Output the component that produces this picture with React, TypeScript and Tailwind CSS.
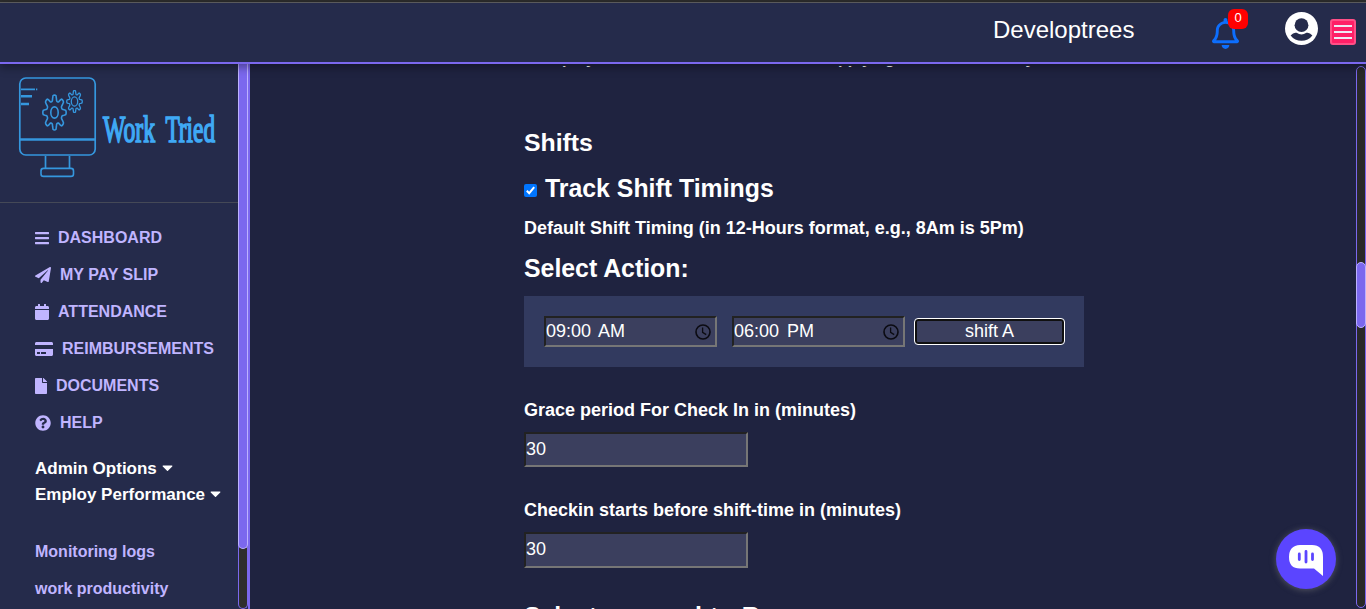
import React from "react";
import {
  FaBars,
  FaPaperPlane,
  FaCalendar,
  FaCreditCard,
  FaFile,
  FaQuestionCircle,
  FaCaretDown,
  FaRegBell,
} from "react-icons/fa";

const links = [
  { label: "DASHBOARD", Icon: FaBars, box: "w-[14px]" },
  { label: "MY PAY SLIP", Icon: FaPaperPlane, box: "w-4" },
  { label: "ATTENDANCE", Icon: FaCalendar, box: "w-[14px]" },
  { label: "REIMBURSEMENTS", Icon: FaCreditCard, box: "w-[18px]" },
  { label: "DOCUMENTS", Icon: FaFile, box: "w-3" },
  { label: "HELP", Icon: FaQuestionCircle, box: "w-4" },
];

function gearPath(cx: number, cy: number, rx: number, ry: number) {
  const pts: string[] = [];
  for (let i = 0; i <= 96; i++) {
    const a = (i / 96) * Math.PI * 2;
    const k = 0.83 + 0.17 * Math.tanh(2.2 * Math.cos(8 * a));
    pts.push(`${(cx + rx * k * Math.sin(a)).toFixed(2)} ${(cy - ry * k * Math.cos(a)).toFixed(2)}`);
  }
  return `M${pts.join("L")}Z`;
}

function Logo() {
  return (
    <svg width="238" height="138" viewBox="0 0 238 138" fill="none" stroke="#3597de" strokeWidth="1.6">
      <rect x="19.8" y="14" width="75.4" height="77" rx="6" strokeWidth="1.7" />
      <path d="M20 75.5H95" strokeWidth="2.6" />
      <path d="M21 25.3H35M36 25.3h1.3" strokeWidth="1.8" />
      <path d="M21 32.3H32M21 40H29" strokeWidth="2.4" />
      <path d={gearPath(54.5, 48.5, 11.7, 17.5)} />
      <ellipse cx="54.5" cy="48.5" rx="3.7" ry="5.6" />
      <path d={gearPath(74.5, 37.5, 7.8, 11)} strokeWidth="1.3" />
      <ellipse cx="74.5" cy="37.5" rx="3.2" ry="4.6" strokeWidth="1.3" />
      <path d="M45.5 92V104M69.5 92V104" strokeWidth="1.7" />
      <rect x="41" y="104.4" width="32.5" height="8" rx="2.5" />
      <g fill="#3fa9f5" stroke="#3fa9f5" fontFamily="'Liberation Serif', serif" fontSize="38">
        <text x="103" y="77.5" textLength="52" lengthAdjust="spacingAndGlyphs" strokeWidth="1.7">Work</text>
        <text x="165.5" y="77.5" textLength="49.5" lengthAdjust="spacingAndGlyphs" strokeWidth="1.7">Tried</text>
      </g>
    </svg>
  );
}

function Avatar() {
  return (
    <svg className="mt-[9px]" width="33" height="33" viewBox="0 0 33 33">
      <circle cx="16.5" cy="16.5" r="16.5" fill="#fff" />
      <path d="M5.6 23.4Q8.6 20 11.6 20.8Q16.5 24 21.4 20.8Q24.4 20 27.4 23.4A13.6 13.6 0 0 1 5.6 23.4Z" fill="#252b4b" />
      <circle cx="16.5" cy="13.2" r="6.9" fill="#252b4b" />
    </svg>
  );
}

function Clock() {
  return (
    <svg width="16" height="16" viewBox="0 0 16 16" fill="none" stroke="#0b0b12" strokeWidth="1.6">
      <circle cx="8" cy="8" r="7" />
      <path d="M7.6 3.5V8.3L11.2 10.6" strokeWidth="1.3" />
    </svg>
  );
}

const inset =
  "border-2 border-t-[#222] border-l-[#222] border-r-[#767676] border-b-[#767676] bg-[#3b3f5e] text-[18px] text-white";

function TimeField({ value }: { value: string }) {
  return (
    <div className={`${inset} flex h-[31px] w-[173px] items-center justify-between pr-[4px] [word-spacing:3px]`}>
      <span className="-mt-px leading-[24px]">{value}</span>
      <Clock />
    </div>
  );
}

export default function App() {
  return (
    <div className="flex h-[609px] w-[1366px] flex-col overflow-hidden bg-[#1f2340] font-['Liberation_Sans',Arial,sans-serif] text-white">
      <div className="h-[2px] shrink-0 bg-[#2d2d2d]" />
      <header className="relative z-10 flex h-[62px] shrink-0 border-t border-b-2 border-t-[#5a5a5c] border-b-[#7b68ee] bg-[#252b4b] pl-[993px] shadow-[0_3px_9px_rgba(0,0,0,0.4)]">
        <div className="mt-[9px] w-[219px] text-[24px] leading-[36px]">Developtrees</div>
        <div className="relative mt-[15px] h-[32px] w-[73px] text-[#0d6efd]">
          <FaRegBell className="h-[31px] w-[27px]" />
          <span className="absolute -top-[9px] left-4 flex h-5 w-5 items-center justify-center rounded-[6px] bg-[#f00] pb-[2px] text-[13px] text-white">0</span>
        </div>
        <Avatar />
        <div className="mt-4 ml-3 flex h-[26px] w-[26px] flex-col items-center justify-center gap-[4px] rounded-[3px] border-2 border-[#ff4f87] bg-[#ff1f67]">
          <span className="h-[2px] w-[18px] bg-[#eee8f5]" />
          <span className="h-[2px] w-[18px] bg-[#eee8f5]" />
          <span className="h-[2px] w-[18px] bg-[#eee8f5]" />
        </div>
      </header>

      <div className="flex h-[545px]">
        <aside className="flex w-[250px] shrink-0 border-r-2 border-[#7b68ee] bg-[#252b4b]">
          <div className="w-[238px]">
            <div className="h-[139px] border-b border-[#454957]">
              <Logo />
            </div>
            <nav className="pt-4 pl-[35px] text-[16px] font-bold text-[#c0b5ff]">
              {links.map(({ label, Icon, box }) => (
                <div key={label} className="flex h-[37px] items-center gap-[9px]">
                  <Icon className={`h-4 shrink-0 ${box}`} preserveAspectRatio="none" />
                  <span>{label}</span>
                </div>
              ))}
              <div className="pt-[15px] text-[17px] leading-[26px] text-white">
                <div className="flex items-center gap-[5px]">
                  Admin Options <FaCaretDown className="-mt-[3px] h-[17px] w-[11px]" />
                </div>
                <div className="flex items-center gap-[5px]">
                  Employ Performance <FaCaretDown className="-mt-[3px] h-[17px] w-[11px]" />
                </div>
              </div>
              <div className="pt-[25px] leading-[37px]">
                <div>Monitoring logs</div>
                <div>work productivity</div>
              </div>
            </nav>
          </div>
          <div className="h-[545px] w-[10px] rounded-b-[5px] border-x border-b border-[#7b68ee] bg-[#2e2e2e]">
            <div className="-mx-px h-[485px] rounded-b-[5px] border border-t-0 border-[#bdb2ff] bg-[#7b68ee]" />
          </div>
        </aside>

        <main className="mt-[2px] min-w-0 flex-1 overflow-hidden pl-[274px] font-bold">
          <div className="-mt-[16px] flex h-[18px] text-[16px] leading-[18px] whitespace-nowrap">
            <span className="w-[13px]" />
            <span className="w-[292px]">Employees can add comments when</span>
            <span>applying for leave on a day</span>
          </div>
          <h2 className="mt-[57px] text-[24.8px] leading-[36px]">Shifts</h2>
          <div className="mt-[10px] flex h-9 items-center">
            <span className="mt-[3px] mr-2 flex h-[13px] w-[13px] items-center justify-center rounded-[2px] bg-[#0075ff]">
              <svg width="13" height="13" viewBox="0 0 13 13" fill="none" stroke="white" strokeWidth="2">
                <path d="M2.8 6.8L5.2 9.2L10.2 3.2" />
              </svg>
            </span>
            <h2 className="text-[24.85px]">Track Shift Timings</h2>
          </div>
          <p className="mt-[8px] text-[18px] leading-[26px]">Default Shift Timing (in 12-Hours format, e.g., 8Am is 5Pm)</p>
          <h2 className="mt-[10px] text-[24.85px] leading-[36px]">Select Action:</h2>
          <div className="mt-[9px] flex h-[71px] w-[560px] bg-[#323a5f] pt-5 pl-5 font-normal">
            <TimeField value="09:00 AM" />
            <div className="w-[15px]" />
            <TimeField value="06:00 PM" />
            <div className="mt-[2px] ml-[9px] flex h-[27px] w-[151px] items-center justify-center rounded-[4px] border border-white bg-[#3b3f5e] text-[18px] shadow-[inset_0_0_0_2px_#101010]">
              <span className="-mt-px leading-[24px]">shift A</span>
            </div>
          </div>
          <p className="mt-[30px] text-[18px] leading-[26px]">Grace period For Check In in (minutes)</p>
          <div className={`${inset} mt-[9px] h-[35px] w-[224px] leading-[30px] font-normal`}>30</div>
          <p className="mt-[30px] text-[18px] leading-[26px]">Checkin starts before shift-time in (minutes)</p>
          <div className={`${inset} mt-[9px] h-[36px] w-[224px] leading-[30px] font-normal`}>30</div>
          <h2 className="mt-[30px] text-[24.8px] leading-[36px] [word-spacing:1.4px] whitespace-nowrap">Select one and to Reason</h2>
        </main>

        <div className="mt-[2px] mb-px h-[542px] w-[10px] shrink-0 rounded-[5px] border border-[#7b68ee] bg-[#292929] pt-[195px]">
          <div className="-mx-px h-[66px] rounded-[5px] border border-[#bdb2ff] bg-[#7b68ee]" />
        </div>
      </div>

      <div className="fixed top-[529px] left-[1276px] h-[60px] w-[60px] rounded-full bg-[#5b45ff] shadow-[0_1px_6px_rgba(120,120,120,0.6)]">
        <svg width="60" height="60" viewBox="0 0 60 60" fill="none">
          <path d="M24 16H36Q47 16 47 28V47L38 39.5H24Q13 39.5 13 28T24 16Z" fill="white" />
          <path d="M23.3 25V30.5M30 22.5V33M36.5 25V30.5" stroke="#5b45ff" strokeWidth="2.8" strokeLinecap="round" />
        </svg>
      </div>
    </div>
  );
}
